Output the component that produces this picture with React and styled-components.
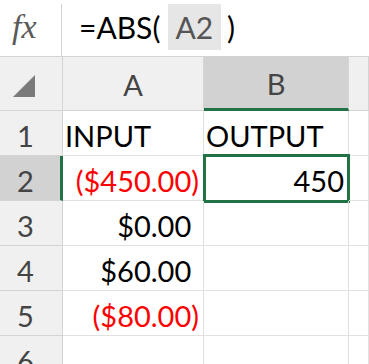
import React from "react";
import styled, { createGlobalStyle, css } from "styled-components";

const GREEN = "#217346";

const GlobalStyle = createGlobalStyle`
	html, body {
		margin: 0;
		padding: 0;
		background: #ffffff;
		overflow: hidden;
	}
	body {
		font-family: Lato, "Open Sans", sans-serif;
	}
`;

const Page = styled.div`
	width: 369px;
	height: 364px;
	overflow: hidden;
	background: #ffffff;
`;

const FormulaBar = styled.div`
	display: flex;
	height: 56px;
	border-bottom: 1px solid #d4d4d4;
`;

const FxBox = styled.div`
	width: 62px;
	margin-top: 4px;
	border-right: 1px solid #d4d4d4;
	display: flex;
	align-items: center;
	padding-left: 12px;
	box-sizing: border-box;
	font-family: "Liberation Serif", serif;
	font-style: italic;
	font-size: 34px;
	color: #5a5a5a;
	padding-bottom: 6px;
`;

const Formula = styled.div`
	display: flex;
	align-items: flex-start;
	padding-left: 17px;
	font-size: 30px;
	color: #000;
	line-height: 46px;
	padding-top: 4px;
`;

const Ref = styled.span`
	background: #e6e6e6;
	color: #555;
	padding: 0 8px 0 7px;
	margin: 0 6px 0 8px;
`;

const Grid = styled.div`
	display: grid;
	grid-template-columns: 63px 141px 145px 1fr;
	grid-template-rows: 54px repeat(6, 45px);
`;

const Corner = styled.div`
	background: #f0f0f0;
	border-right: 1px solid #d4d4d4;
	border-bottom: 1px solid #d4d4d4;
	display: flex;
	align-items: flex-start;
	padding: 18px 0 0 13px;
	box-sizing: border-box;
`;

const ColHeader = styled.div`
	background: ${(p) => (p.$active ? "#d2d2d2" : "#f0f0f0")};
	border-right: 1px solid #d4d4d4;
	border-bottom: ${(p) => (p.$active ? `3px solid ${GREEN}` : "1px solid #d4d4d4")};
	display: flex;
	justify-content: center;
	align-items: center;
	font-size: 29px;
	color: #444;
	box-sizing: border-box;
	padding-top: 2px;
`;

const RowHeader = styled.div`
	background: ${(p) => (p.$active ? "#d2d2d2" : "#f0f0f0")};
	border-right: ${(p) => (p.$active ? `3px solid ${GREEN}` : "1px solid #d4d4d4")};
	border-bottom: 1px solid #d4d4d4;
	padding-left: 17px;
	font-size: 29px;
	color: #444;
	line-height: 41px;
	padding-top: 4px;
	box-sizing: border-box;
`;

const Cell = styled.div`
	position: relative;
	border-right: 1px solid #e1e1e1;
	border-bottom: 1px solid #e1e1e1;
	box-sizing: border-box;
	font-size: 29px;
	line-height: 41px;
	padding-top: 4px;
	padding-left: 2px;
	padding-right: 4px;
	white-space: nowrap;
	color: ${(p) => (p.$negative ? "#ff0000" : "#000")};
	text-align: ${(p) => (p.$right ? "right" : "left")};
	${(p) =>
		p.$selected &&
		css`
			&::after {
				content: "";
				position: absolute;
				left: -1px;
				top: -2px;
				width: 147px;
				height: 49px;
				border: 3px solid ${GREEN};
				box-sizing: border-box;
			}
		`}
`;

const Pad = styled.span`
	visibility: hidden;
`;

const rows = [
	{ a: "INPUT", b: "OUTPUT", text: true },
	{ a: "($450.00)", neg: true, b: "450" },
	{ a: "$0.00" },
	{ a: "$60.00" },
	{ a: "($80.00)", neg: true },
	{},
];

const Money = ({ value, neg }) => (neg ? value : <>{value}<Pad>)</Pad></>);

const App = () => {
	return (
		<Page>
			<GlobalStyle />
			<FormulaBar>
				<FxBox>fx</FxBox>
				<Formula>
					=ABS(
					<Ref>A2</Ref>)
				</Formula>
			</FormulaBar>
			<Grid>
				<Corner>
					<svg width="22" height="22" viewBox="0 0 22 22">
						<polygon points="22,0 22,22 0,22" fill="#7a7a7a" />
					</svg>
				</Corner>
				<ColHeader>A</ColHeader>
				<ColHeader $active>B</ColHeader>
				<ColHeader />
				{rows.map((r, i) => (
					<React.Fragment key={i}>
						<RowHeader $active={i === 1}>{i + 1}</RowHeader>
						<Cell $right={!r.text && r.a} $negative={r.neg}>
							{r.text ? r.a : r.a && <Money value={r.a} neg={r.neg} />}
						</Cell>
						<Cell $right={!r.text} $selected={i === 1}>
							{r.b}
						</Cell>
						<Cell />
					</React.Fragment>
				))}
			</Grid>
		</Page>
	);
};

export default App;
